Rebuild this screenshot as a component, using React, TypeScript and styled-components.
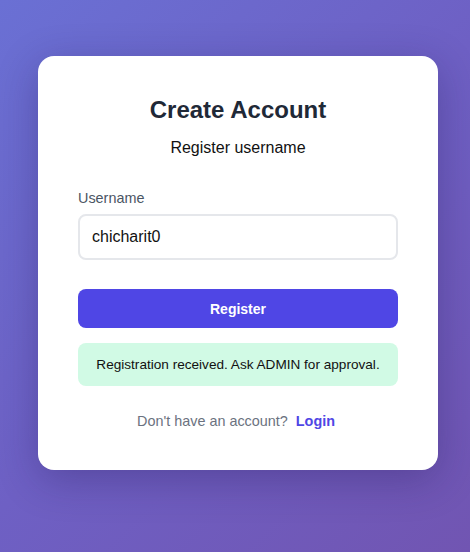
import * as React from "react";
import styled, { createGlobalStyle } from "styled-components";

const GlobalStyle = createGlobalStyle`
  html, body {
    margin: 0;
    padding: 0;
  }
  body {
    font-family: "Liberation Sans", Arial, sans-serif;
    background: linear-gradient(135deg, #6a70d4 0%, #6e60c4 50%, #7155b2 100%);
    min-height: 100vh;
  }
  * {
    box-sizing: border-box;
  }
`;

const Page = styled.main`
  min-height: 100vh;
  display: flex;
  justify-content: center;
  align-items: flex-start;
  padding: 56px 0 0 6px;
`;

const Card = styled.section`
  width: 400px;
  background: #ffffff;
  border-radius: 16px;
  padding: 40px;
  box-shadow: 0 10px 40px rgba(30, 20, 80, 0.3);
  display: flex;
  flex-direction: column;
`;

const Title = styled.h2`
  margin: 0 0 15px;
  text-align: center;
  font-size: 24px;
  line-height: 28px;
  font-weight: 700;
  color: #1f2937;
`;

const Subtitle = styled.p`
  margin: 0 0 33px;
  text-align: center;
  font-size: 16px;
  line-height: 18px;
  color: #111111;
`;

const Field = styled.div`
  display: flex;
  flex-direction: column;
  gap: 7px;
  margin-bottom: 29px;
`;

const Label = styled.label`
  font-size: 0.9rem;
  line-height: 17px;
  color: #4b5563;
`;

const Input = styled.input`
  height: 46px;
  padding: 0 12px;
  border: 2px solid #e5e7eb;
  border-radius: 8px;
  font-family: inherit;
  font-size: 16px;
  color: #111111;
  outline: none;
`;

const Button = styled.button`
  height: 39px;
  border: none;
  border-radius: 8px;
  background: #4f46e5;
  color: #ffffff;
  font-family: inherit;
  font-size: 14px;
  font-weight: 700;
  cursor: pointer;
  margin-bottom: 15px;
`;

const Notice = styled.div<{ $tone: "success" | "error" }>`
  padding: 12px;
  border-radius: 8px;
  text-align: center;
  font-size: 0.85rem;
  line-height: 19px;
  color: ${(p) => (p.$tone === "success" ? "#111111" : "#991b1b")};
  background: ${(p) => (p.$tone === "success" ? "#d1fae5" : "#fee2e2")};
  margin-bottom: 27px;
`;

const Footer = styled.p`
  margin: 0;
  text-align: center;
  font-size: 0.9rem;
  line-height: 17px;
  color: #6b7280;
`;

const LinkButton = styled.a`
  margin: 0 4px 0 8px;
  color: #4f46e5;
  font-weight: 700;
  text-decoration: none;
  cursor: pointer;
`;

export default function App() {
  const [username, setUsername] = React.useState("chicharit0");

  return (
    <>
      <GlobalStyle />
      <Page>
        <Card>
          <Title>Create Account</Title>
          <Subtitle>Register username</Subtitle>
          <Field>
            <Label htmlFor="username">Username</Label>
            <Input
              id="username"
              value={username}
              onChange={(e) => setUsername(e.target.value)}
            />
          </Field>
          <Button type="button">Register</Button>
          <Notice $tone="success">
            Registration received. Ask ADMIN for approval.
          </Notice>
          <Footer>
            Don't have an account?
            <LinkButton>Login</LinkButton>
          </Footer>
        </Card>
      </Page>
    </>
  );
}
